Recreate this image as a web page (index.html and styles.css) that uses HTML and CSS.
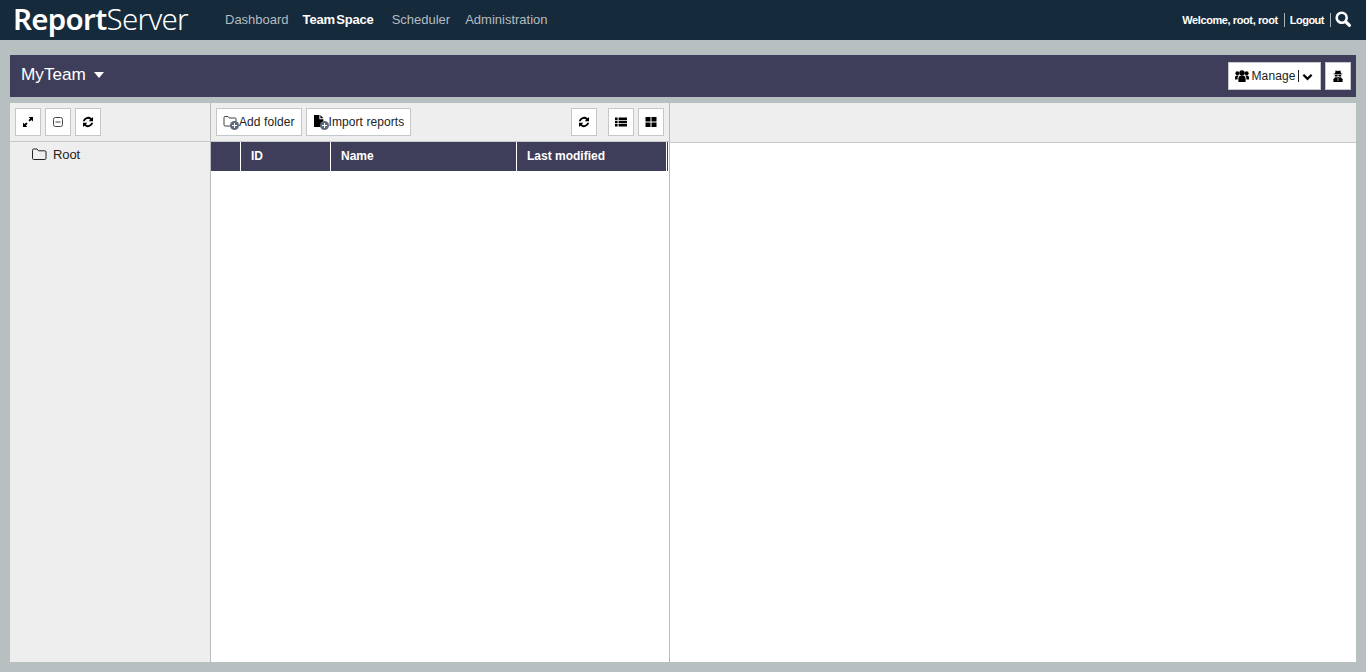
FILE: index.html
```html
<!DOCTYPE html>
<html lang="en">
<head>
<meta charset="utf-8">
<title>ReportServer</title>
<link rel="stylesheet" href="styles.css">
</head>
<body>
<svg class="defs" width="0" height="0" aria-hidden="true">
  <defs>
    <symbol id="refresh" viewBox="0 0 12 12">
      <path d="M0.8 5.2A5.3 5.3 0 0 1 9.6 2.3L11 0.9V5.2H6.7L8.2 3.7A3.3 3.3 0 0 0 2.8 5.2Z"/>
      <path d="M11.2 6.8A5.3 5.3 0 0 1 2.4 9.7L1 11.1V6.8H5.3L3.8 8.3A3.3 3.3 0 0 0 9.2 6.8Z"/>
    </symbol>
  </defs>
</svg>
<header class="topbar">
  <div class="logo"><b>Report</b>Server</div>
  <nav class="mainnav">
    <a class="nav-item">Dashboard</a>
    <a class="nav-item active"><span>Team</span><span class="word">Space</span></a>
    <a class="nav-item">Scheduler</a>
    <a class="nav-item">Administration</a>
  </nav>
  <div class="userbox">
    <span>Welcome, root, root</span>
    <i class="sep"></i>
    <span class="logout">Logout</span>
    <i class="sep"></i>
    <svg class="search" viewBox="0 0 16 16"><circle cx="6.7" cy="6.7" r="5" fill="none" stroke="#fff" stroke-width="2.6"/><path d="M10.6 10.6L14.4 14.4" stroke="#fff" stroke-width="3.2" stroke-linecap="round"/></svg>
  </div>
</header>
<main class="content">
  <section class="teambar">
    <div class="teamname">MyTeam <span class="caret"></span></div>
    <div class="teamtools">
      <button class="btn manage">
        <svg class="ico-users" viewBox="0 0 14 12"><circle cx="7" cy="3" r="2.7"/><circle cx="2.4" cy="3.2" r="2"/><circle cx="11.6" cy="3.2" r="2"/><path d="M3.4 12V8.2A2.6 2.6 0 0 1 6 5.8H8A2.6 2.6 0 0 1 10.6 8.2V12Z"/><path d="M0 9.4V7.2A1.9 1.9 0 0 1 1.9 5.4H3.8A3.6 3.6 0 0 0 2.6 8.2V9.4Z"/><path d="M14 9.4V7.2A1.9 1.9 0 0 0 12.1 5.4H10.2A3.6 3.6 0 0 1 11.4 8.2V9.4Z"/></svg>
        <span>Manage</span><i class="btn-sep"></i>
        <svg class="chev" viewBox="0 0 12 8"><path d="M1.5 1.5L6 6L10.5 1.5" fill="none" stroke="#000" stroke-width="2.4"/></svg>
      </button>
      <button class="btn icon-btn">
        <svg class="ico12" viewBox="0 0 12 12"><path d="M3.6 0.4L6 1L8.4 0.4L9 3.4H10.4V4.2H1.6V3.4H3Z"/><path d="M2.8 4.8H5.4V6.6H2.8ZM6.6 4.8H9.2V6.6H6.6ZM5.4 5.2H6.6V5.8H5.4Z"/><path d="M1.4 12V9.2L3.2 7.2H8.8L10.6 9.2V12Z"/><path d="M5.7 8H6.3V11H5.7Z" fill="#fff"/></svg>
      </button>
    </div>
  </section>
  <section class="workspace">
    <aside class="tree">
      <div class="toolbar">
        <button class="btn icon-btn">
          <svg class="ico12" viewBox="0 0 12 12"><path d="M6.6 1H11V5.4L9.5 3.9L7.8 5.6L6.4 4.2L8.1 2.5Z"/><path d="M5.4 11H1V6.6L2.5 8.1L4.2 6.4L5.6 7.8L3.9 9.5Z"/></svg>
        </button>
        <button class="btn icon-btn">
          <svg class="ico12" viewBox="0 0 12 12"><rect x="1.5" y="1.5" width="9" height="9" rx="2" fill="none" stroke="#444" stroke-width="1"/><path d="M3.5 6H8.5" stroke="#444" stroke-width="1"/></svg>
        </button>
        <button class="btn icon-btn"><svg class="ico12"><use href="#refresh"/></svg></button>
      </div>
      <div class="tree-row">
        <svg class="folder" viewBox="0 0 16 14"><path d="M1.5 3.2A1.2 1.2 0 0 1 2.7 2H6L7.5 3.8H13.8A1.2 1.2 0 0 1 15 5V11.3A1.2 1.2 0 0 1 13.8 12.5H2.7A1.2 1.2 0 0 1 1.5 11.3Z" fill="none" stroke="#222" stroke-width="1"/></svg>
        <span>Root</span>
      </div>
    </aside>
    <section class="listing">
      <div class="toolbar">
        <button class="btn text-btn">
          <span class="badge-wrap">
            <svg class="ico14" viewBox="0 0 14 12"><path d="M1 2.5A1 1 0 0 1 2 1.5H5L6.2 3H12A1 1 0 0 1 13 4V10A1 1 0 0 1 12 11H2A1 1 0 0 1 1 10Z" fill="none" stroke="#444" stroke-width="1"/></svg>
            <span class="plus"></span>
          </span>Add folder
        </button>
        <button class="btn text-btn">
          <span class="badge-wrap">
            <svg class="ico14" viewBox="0 0 14 12"><path d="M1 0H6.4V4.2H10.4V12H1Z" fill="#000"/><path d="M7.4 0L10.4 3.2H7.4Z" fill="#000"/></svg>
            <span class="plus"></span>
          </span>Import reports
        </button>
        <span class="spacer"></span>
        <button class="btn icon-btn"><svg class="ico12"><use href="#refresh"/></svg></button>
        <span class="gap-s"></span>
        <button class="btn icon-btn">
          <svg class="ico12" viewBox="0 0 12 12"><path d="M0 1.5H2.6V4H0ZM3.6 1.5H12V4H3.6ZM0 4.8H2.6V7.2H0ZM3.6 4.8H12V7.2H3.6ZM0 8H2.6V10.5H0ZM3.6 8H12V10.5H3.6Z"/></svg>
        </button>
        <button class="btn icon-btn">
          <svg class="ico12" viewBox="0 0 12 12"><path d="M0.5 1H5.5V5.5H0.5ZM6.5 1H11.5V5.5H6.5ZM0.5 6.5H5.5V11H0.5ZM6.5 6.5H11.5V11H6.5Z"/></svg>
        </button>
      </div>
      <div class="thead">
        <div class="th th-check"></div>
        <div class="th th-id">ID</div>
        <div class="th th-name">Name</div>
        <div class="th th-mod">Last modified</div>
        <div class="th-end"></div>
      </div>
    </section>
    <section class="preview">
      <div class="toolbar toolbar-tall"></div>
    </section>
  </section>
</main>
</body>
</html>
```

FILE: styles.css
```css
* { box-sizing: border-box; }
html, body { height: 100%; }
body {
  margin: 0;
  overflow: hidden;
  display: flex;
  flex-direction: column;
  background: #b8bfc1;
  font-family: "Liberation Sans", Arial, sans-serif;
  font-size: 12px;
  color: #222;
}
.defs { position: absolute; }

.topbar {
  height: 40px;
  flex: none;
  display: flex;
  align-items: center;
  background: #152a3a;
  color: #fff;
  padding: 0 14px;
}
.logo {
  width: 211px;
  font-family: "Noto Sans", sans-serif;
  font-size: 29.5px;
  line-height: 40px;
  letter-spacing: -0.7px;
  font-weight: 300;
  color: #fff;
  margin-top: -2px;
  text-indent: -1px;
}
.logo b { font-weight: 600; }
.mainnav { display: flex; gap: 15px; font-size: 13px; margin-top: -2px; }
.nav-item { color: #b5bcc0; }
.nav-item.active { color: #fff; font-weight: 700; letter-spacing: -0.2px; margin-left: -1px; margin-right: 3px; }
.word { margin-left: 1.5px; }
.userbox {
  margin-left: auto;
  display: flex;
  align-items: center;
  gap: 6px;
  font-size: 11px;
  font-weight: 700;
  letter-spacing: -0.4px;
  color: #fff;
  padding-right: 1px;
}
.logout { letter-spacing: -0.5px; margin-left: -1px; }
.sep { width: 1px; height: 14px; background: #a9b2b7; }
.search { width: 16px; height: 16px; margin-top: -2px; margin-left: -2px; }

.content {
  flex: 1;
  min-height: 0;
  display: flex;
  flex-direction: column;
  padding: 15px 10px 10px;
  gap: 6px;
}
.teambar {
  height: 42px;
  flex: none;
  display: flex;
  align-items: center;
  justify-content: space-between;
  background: #3f3e5a;
  padding: 0 5px 0 11px;
}
.teamname { color: #fff; font-size: 17.2px; line-height: 34px; height: 38px; }
.caret {
  display: inline-block;
  margin-left: 3px;
  vertical-align: 2px;
  border-left: 5.5px solid transparent;
  border-right: 5.5px solid transparent;
  border-top: 6px solid #fff;
}
.teamtools { display: flex; gap: 4px; }

.btn {
  height: 28px;
  padding: 0;
  display: inline-flex;
  align-items: center;
  justify-content: center;
  background: #fff;
  border: 1px solid #c4c8ca;
  font-family: inherit;
  font-size: 12px;
  color: #222;
}
.icon-btn { width: 26px; }
.text-btn { padding: 0 6px; letter-spacing: 0.08px; }
.manage { width: 93px; letter-spacing: 0.1px; padding-right: 1px; }
.manage span { margin-left: 3px; }
.btn-sep { width: 1px; height: 12px; background: #222; margin: 0 3px 0 3px; }
.chev { width: 11px; height: 8px; margin-top: 1px; }
.ico12 { width: 12px; height: 12px; fill: #000; display: block; }
.ico14 { width: 14px; height: 12px; display: block; }
.ico-users { width: 14px; height: 12px; fill: #000; display: block; }
.badge-wrap { position: relative; display: block; width: 16px; height: 14px; }
.plus {
  position: absolute;
  right: 0;
  bottom: -1px;
  width: 9px;
  height: 9px;
  border-radius: 50%;
  background: linear-gradient(#fff, #fff) center / 5px 1px no-repeat,
              linear-gradient(#fff, #fff) center / 1px 5px no-repeat,
              #5d6a7b;
}

.workspace { flex: 1; min-height: 0; display: flex; }
.toolbar {
  height: 39px;
  flex: none;
  display: flex;
  align-items: center;
  gap: 4px;
  padding: 0 5px;
  background: #eeeeee;
  border-bottom: 1px solid #c6c8ca;
}
.toolbar-tall { height: 40px; }
.tree { width: 201px; background: #eeeeee; border-right: 1px solid #b8bcbf; }
.tree-row {
  display: flex;
  align-items: center;
  gap: 6px;
  padding: 0 0 0 21px;
  height: 24px;
  font-size: 13px;
  letter-spacing: -0.1px;
  color: #222;
}
.folder { width: 16px; height: 14px; }
.listing { width: 459px; background: #fff; border-right: 1px solid #b8bcbf; }
.spacer { flex: 1; }
.gap-s { width: 3px; }
.preview { flex: 1; background: #fff; }
.thead {
  height: 29px;
  margin-right: 1px;
  display: flex;
  background: #3f3e5a;
  color: #fff;
  font-weight: 700;
  font-size: 12px;
  line-height: 28px;
}
.th { padding-left: 10px; border-right: 1px solid #fff; height: 29px; }
.th-check { width: 30px; }
.th-id { width: 90px; }
.th-name { width: 186px; }
.th-mod { width: 150px; }
.th-end { flex: 1; }
```
